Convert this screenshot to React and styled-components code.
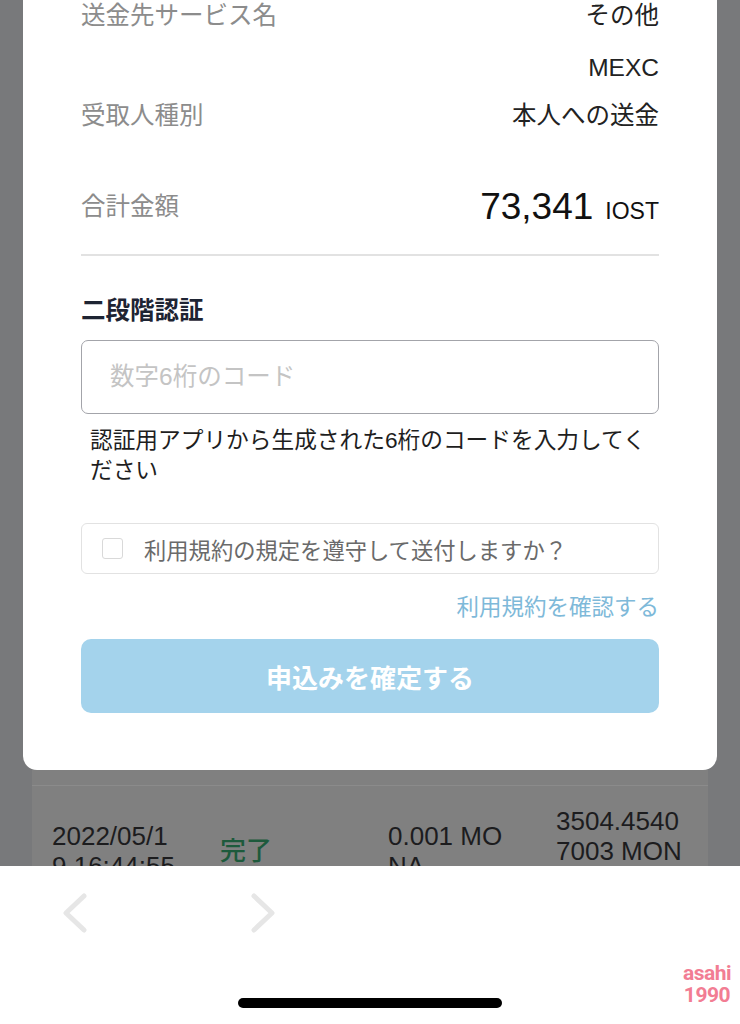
import React from 'react'
import styled, { createGlobalStyle } from 'styled-components'

const GlobalStyle = createGlobalStyle`
html, body {
  margin: 0;
  padding: 0;
}
body {
  font-family: "Liberation Sans", "Noto Sans CJK JP", sans-serif;
  background: #fff;
}
`

function App() {
  return (
    <Page>
      <GlobalStyle />
      <Screen>
        <Modal>
          <InfoRow>
            <Label>送金先サービス名</Label>
            <Value>その他</Value>
          </InfoRow>
          <InfoRow $gap={20}>
            <span />
            <Value>MEXC</Value>
          </InfoRow>
          <InfoRow $gap={16}>
            <Label>受取人種別</Label>
            <Value>本人への送金</Value>
          </InfoRow>
          <TotalRow>
            <Label>合計金額</Label>
            <Total>
              <Amount>73,341</Amount>
              <Unit>IOST</Unit>
            </Total>
          </TotalRow>
          <Divider />

          <Heading>二段階認証</Heading>
          <CodeInput placeholder="数字6桁のコード" />
          <Help>認証用アプリから生成された6桁のコードを入力してください</Help>

          <CheckRow>
            <CheckBox />
            <CheckText>利用規約の規定を遵守して送付しますか？</CheckText>
          </CheckRow>
          <TermsLink>利用規約を確認する</TermsLink>
          <SubmitButton>申込みを確定する</SubmitButton>
        </Modal>

        <TableCard>
          <TableRow>
            <Cell>2022/05/1<br />9 16:44:55</Cell>
            <Cell $green>完了</Cell>
            <Cell>0.001 MO<br />NA</Cell>
            <Cell>3504.4540<br />7003 MON<br />A</Cell>
          </TableRow>
        </TableCard>
      </Screen>

      <Toolbar>
        <NavRow>
          <svg width="26" height="40" viewBox="0 0 26 40">
            <polyline points="22,3 4,20 22,37" fill="none" stroke="#e6e6e6" strokeWidth="5" strokeLinecap="round" strokeLinejoin="round" />
          </svg>
          <svg width="26" height="40" viewBox="0 0 26 40">
            <polyline points="4,3 22,20 4,37" fill="none" stroke="#e6e6e6" strokeWidth="5" strokeLinecap="round" strokeLinejoin="round" />
          </svg>
        </NavRow>
        <HomeBar />
        <Watermark>
          <span>asahi</span>
          <span>1990</span>
        </Watermark>
      </Toolbar>
    </Page>
  )
}

export default App

const Page = styled.div`
width: 740px;
height: 1024px;
display: flex;
flex-direction: column;
overflow: hidden;
`
const Screen = styled.div`
height: 866px;
flex-shrink: 0;
display: flex;
flex-direction: column;
background: #78797b;
overflow: hidden;
`
const Modal = styled.div`
margin: 0 23px;
padding: 0 58px 57px;
background: #fff;
border-radius: 0 0 14px 14px;
display: flex;
flex-direction: column;
flex-shrink: 0;
`
const InfoRow = styled.div`
display: flex;
justify-content: space-between;
align-items: center;
height: 32px;
margin-top: ${p => p.$gap || 0}px;
`
const Label = styled.span`
font-size: 24.5px;
color: #8c8c8c;
line-height: 32px;
`
const Value = styled.span`
font-size: 24.5px;
color: #222;
line-height: 32px;
`
const TotalRow = styled(InfoRow)`
height: 40px;
margin-top: 55px;
`
const Total = styled.div`
display: flex;
align-items: baseline;
gap: 12px;
color: #111;
`
const Amount = styled.span`
font-size: 37px;
`
const Unit = styled.span`
font-size: 23px;
`
const Divider = styled.div`
margin-top: 27px;
height: 2px;
background: #e2e2e2;
`
const Heading = styled.div`
margin-top: 39px;
font-size: 24.5px;
line-height: 32px;
font-weight: bold;
color: #1e2433;
`
const CodeInput = styled.input`
margin-top: 13px;
height: 74px;
box-sizing: border-box;
width: 100%;
border: 1.5px solid #a3a4aa;
border-radius: 7px;
padding: 0 0 0 28px;
font-family: inherit;
font-size: 24.5px;
outline: none;
&::placeholder {
  color: #c4c4c4;
}
`
const Help = styled.div`
margin-top: 11px;
padding-left: 9px;
font-size: 22.7px;
line-height: 30px;
color: #1e1e1e;
`
const CheckRow = styled.div`
margin-top: 38px;
height: 51px;
box-sizing: border-box;
border: 1.5px solid #e2e2e2;
border-radius: 6px;
display: flex;
align-items: center;
padding-left: 20px;
gap: 21px;
`
const CheckBox = styled.span`
width: 21px;
height: 21px;
box-sizing: border-box;
border: 1.5px solid #d9d9d9;
border-radius: 3px;
`
const CheckText = styled.span`
font-size: 22.3px;
color: #6a6a6a;
`
const TermsLink = styled.div`
margin-top: 18px;
text-align: right;
font-size: 22.5px;
line-height: 32px;
color: #7eb9d9;
`
const SubmitButton = styled.button`
margin-top: 15px;
height: 74px;
width: 100%;
border: none;
border-radius: 10px;
background: #a4d3ec;
color: #fff;
font-family: inherit;
font-size: 26px;
font-weight: bold;
`
const TableCard = styled.div`
margin: 0 32px;
padding-top: 15px;
flex: 1;
background: #808080;
`
const TableRow = styled.div`
border-top: 1.5px solid #8b8b8b;
padding: 20px 0 0 20px;
display: grid;
grid-template-columns: repeat(4, 168px);
align-items: center;
`
const Cell = styled.div`
font-size: 26px;
line-height: 30px;
font-weight: ${p => p.$green ? 500 : 400};
color: ${p => p.$green ? '#1d5a3c' : '#1c1c1e'};
`
const Toolbar = styled.div`
position: relative;
flex: 1;
background: #fff;
display: flex;
flex-direction: column;
`
const NavRow = styled.div`
display: flex;
gap: 162px;
padding: 27px 0 0 62px;
`
const HomeBar = styled.div`
margin: auto auto 16px;
width: 264px;
height: 10px;
border-radius: 5px;
background: #000;
`
const Watermark = styled.div`
position: absolute;
right: 9px;
bottom: 18px;
display: flex;
flex-direction: column;
align-items: center;
gap: 1px;
font-family: Roboto, sans-serif;
font-weight: bold;
font-size: 21px;
line-height: 21px;
letter-spacing: -0.5px;
color: #f27d93;
`
